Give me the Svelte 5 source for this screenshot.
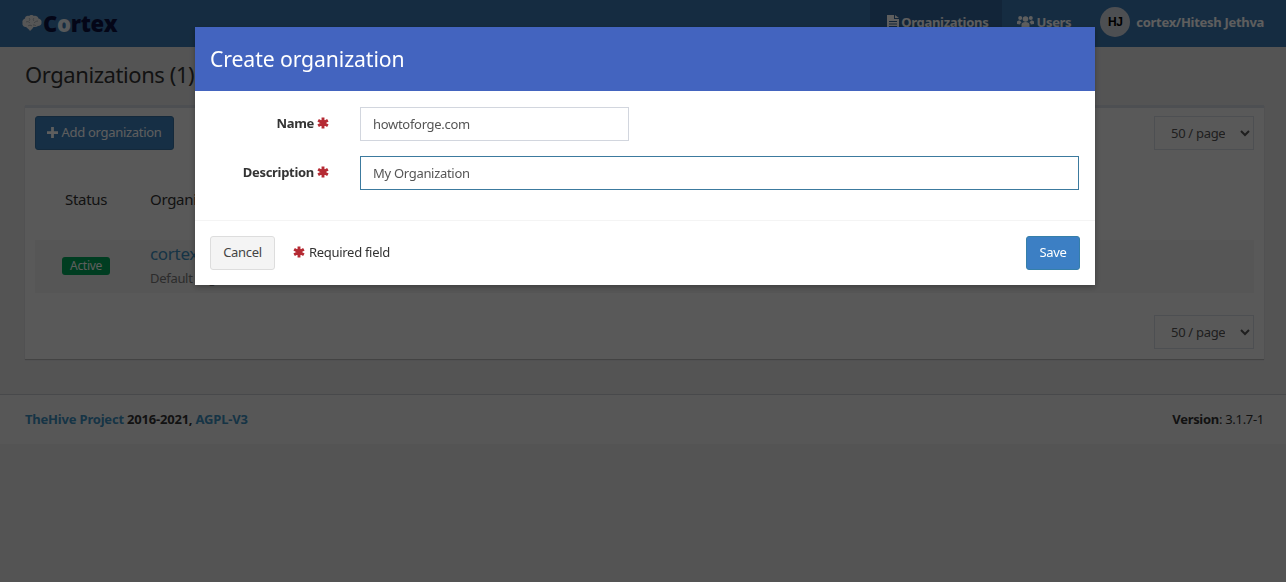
<script>
  let name = $state("howtoforge.com");
  let description = $state("My Organization");
  const pageSizes = ["50 / page"];
</script>

{#snippet star()}
  <svg class="star" viewBox="0 0 12 12" aria-hidden="true">
    <path d="M6 6V.400M6 6l4.850-2.800M6 6l4.850 2.800M6 6v5.600M6 6L1.150 8.800M6 6L1.150 3.200" />
  </svg>
{/snippet}

<div class="page">
  <header class="navbar">
    <div class="logo">
      <svg class="brain" viewBox="0 0 20 18" aria-hidden="true">
        <path d="M8 17c-1-2-3-3-4-4-2 0-4-1.500-3.500-4C0 7 1 5 3 4.500c0-2 2-3 4-2.500 1-1.500 4-1.500 5 0 2-.5 4 .5 4.500 2.500 2 .5 3.500 2 3 4 .3 2-1.500 3.500-3.500 3.500-1 1-3 1-4.500 1-.5 1-1.500 2-3.500 4z" />
        <path class="folds" d="M4 8c2-1 3 0 4 1M7 4c1 1 1 2 0 3M12 4c-1 1-1 2 0 3M16 7c-2 0-3 1-4 2M6 12c1-1 3-1 4 0M14 12c-1-1-2-1-3-1" />
      </svg>
      <span class="wordmark">C<span class="o">o</span>rtex</span>
    </div>
    <nav class="nav">
      <a class="nav-item active" href="#/orgs">
        <svg class="nav-icon" viewBox="0 0 12 14" aria-hidden="true">
          <path fill-rule="evenodd" d="M0 0h7v4h5v10H0zM8 0l4 3H8zM2 6v1h8V6zM2 8.500v1h8v-1zM2 11v1h8v-1z" />
        </svg>
        Organizations
      </a>
      <a class="nav-item" href="#/users">
        <svg class="nav-icon users" viewBox="0 0 17 14" aria-hidden="true">
          <circle cx="8.500" cy="4" r="2.800" />
          <circle cx="3.200" cy="3" r="2" />
          <circle cx="13.800" cy="3" r="2" />
          <path d="M4.500 13V9.500C4.500 8 6 7 8.500 7s4 1 4 2.500V13zM0 9V7c0-1 1-1.500 3-1.500 .8 1 1 1.500 1.500 2C3.500 8 3.300 8.500 3.200 9.500zM17 9V7c0-1-1-1.500-3-1.500-.8 1-1 1.500-1.500 2 1 .5 1.200 1 1.300 2z" />
        </svg>
        Users
      </a>
      <div class="user">
        <span class="avatar">HJ</span>
        <span class="user-name">cortex/Hitesh Jethva</span>
      </div>
    </nav>
  </header>

  <main class="content">
    <h1>Organizations (1)</h1>
    <section class="box">
      <div class="toolbar">
        <button class="btn-add">
          <svg class="plus" viewBox="0 0 12 12" aria-hidden="true"><path d="M4.500 0h3v4.500H12v3H7.500V12h-3V7.500H0v-3h4.500z" /></svg>
          Add organization
        </button>
        <select class="page-size">
          {#each pageSizes as size}<option>{size}</option>{/each}
        </select>
      </div>
      <div class="table-head">
        <span>Status</span>
        <span>Organization</span>
      </div>
      <div class="table-row">
        <div class="status"><span class="badge">Active</span></div>
        <div class="org">
          <a class="org-link" href="#/cortex">cortex</a>
          <div class="org-desc">Default organization</div>
        </div>
      </div>
      <div class="toolbar bottom">
        <select class="page-size">
          {#each pageSizes as size}<option>{size}</option>{/each}
        </select>
      </div>
    </section>
  </main>

  <footer class="footer">
    <div class="credits"><a href="#/hive">TheHive Project</a> 2016-2021, <a href="#/agpl">AGPL-V3</a></div>
    <div class="version"><b>Version</b>: 3.1.7-1</div>
  </footer>
</div>

<div class="backdrop">
  <div class="modal">
    <div class="modal-header">Create organization</div>
    <form class="modal-body">
      <div class="field">
        <label for="org-name">Name {@render star()}</label>
        <input id="org-name" class="short" bind:value={name} />
      </div>
      <div class="field">
        <label for="org-desc">Description {@render star()}</label>
        <input id="org-desc" class="focused" bind:value={description} />
      </div>
    </form>
    <div class="modal-footer">
      <button class="btn-cancel">Cancel</button>
      <span class="required">{@render star()} Required field</span>
      <button class="btn-save">Save</button>
    </div>
  </div>
</div>

<style>
  :global(body) {
    font: 13px "Noto Sans", "Open Sans", sans-serif;
    color: #333;
    background: #e4e4e5;
  }

  .page {
    min-height: 582px;
    letter-spacing: -0.3px;
  }

  a {
    text-decoration: none;
    color: #3c8dbc;
  }

  .navbar {
    display: flex;
    justify-content: space-between;
    height: 47px;
    background: #3b78b0;
  }

  .logo {
    display: flex;
    align-items: center;
    gap: 1px;
    padding-left: 22px;
    height: 47px;
  }

  .brain {
    width: 20px;
    height: 18px;
    margin-top: -2px;
  }

  .brain path {
    fill: #e8e8e8;
  }

  .brain .folds {
    fill: none;
    stroke: #9aa4ad;
    stroke-width: 0.8;
  }

  .wordmark {
    font: 800 22px/1 "Open Sans", sans-serif;
    color: #0c1240;
    margin-top: -1px;
  }

  .wordmark .o {
    color: #e9eff3;
  }

  .nav {
    display: flex;
    align-items: center;
    padding-right: 22px;
  }

  .nav-item {
    display: flex;
    align-items: center;
    gap: 2px;
    height: 47px;
    padding: 0 15px 3px;
    color: #fff;
    font-weight: 700;
    box-sizing: border-box;
  }

  .nav-item.active {
    background: #33669a;
    padding: 0 14px 3px 17px;
  }

  .nav-item:nth-child(2) {
    padding-right: 14px;
  }

  .nav-icon {
    width: 12px;
    height: 14px;
    fill: #fff;
  }

  .nav-icon.users {
    width: 17px;
  }

  .user {
    display: flex;
    align-items: center;
    gap: 6px;
    color: #fff;
    font-weight: 700;
    margin-left: 15px;
    padding-bottom: 3px;
  }

  .avatar {
    display: grid;
    place-items: center;
    width: 30px;
    height: 30px;
    border-radius: 50%;
    background: #d2d6de;
    color: #000;
    font: 700 12px "Liberation Sans", sans-serif;
  }

  .content {
    padding: 0 22px 0 25px;
  }

  h1 {
    margin: 0;
    padding: 11px 0 15px;
    font-size: 22px;
    line-height: 32px;
    font-weight: 400;
    letter-spacing: -0.42px;
  }

  .box {
    background: #f1f1f1;
    border-top: 3px solid #d2d6de;
    padding: 8px 10px 10px;
    box-shadow: 0 1px 1px rgba(0, 0, 0, 0.2);
  }

  .toolbar {
    display: flex;
    justify-content: space-between;
    align-items: center;
    height: 34px;
  }

  .toolbar.bottom {
    justify-content: flex-end;
    margin-top: 22px;
  }

  .btn-add {
    display: flex;
    align-items: center;
    gap: 3px;
    width: 139px;
    height: 34px;
    justify-content: center;
    padding: 0 0 2px;
    border: 1px solid #36709f;
    border-radius: 3px;
    background: #3d80bc;
    color: #fff;
    font: inherit;
    letter-spacing: inherit;
  }

  .plus {
    width: 11px;
    height: 11px;
    fill: #fff;
  }

  .page-size {
    width: 100px;
    height: 34px;
    border: 1px solid #d2d6de;
    background: #f1f1f1;
    color: #555;
    font: inherit;
    letter-spacing: -0.3px;
    padding: 0 12px;
  }

  .table-head {
    display: grid;
    grid-template-columns: 85px 1fr;
    padding: 39px 0 0 30px;
    font-size: 15px;
    line-height: 20px;
    height: 51px;
  }

  .table-row {
    display: grid;
    grid-template-columns: 115px 1fr;
    align-items: center;
    height: 53px;
    background: #e9e9e9;
  }

  .status {
    padding: 0 0 2px 27px;
  }

  .badge {
    display: block;
    width: 48px;
    height: 18px;
    line-height: 18px;
    text-align: center;
    border-radius: 3px;
    background: #00a65a;
    color: #fff;
    font-size: 12px;
  }

  .org {
    padding-bottom: 2px;
  }

  .org-link {
    font-size: 17px;
    line-height: 20px;
  }

  .org-desc {
    color: #777;
    font-size: 13px;
    margin-top: 5px;
  }

  .footer {
    display: flex;
    justify-content: space-between;
    align-items: center;
    height: 50px;
    margin-top: 35px;
    padding: 0 22px 1px 25px;
    background: #ececec;
    border-top: 1px solid #c4c6cc;
    box-sizing: border-box;
    font-weight: 700;
  }

  .credits {
    letter-spacing: -0.2px;
  }

  .footer a {
    font-weight: 700;
  }

  .version {
    font-weight: 400;
  }

  .backdrop {
    position: fixed;
    inset: 0;
    background: rgba(0, 0, 0, 0.63);
  }

  .modal {
    width: 900px;
    margin: 27px 0 0 195px;
    background: #fff;
    letter-spacing: -0.3px;
    box-shadow: 0 2px 6px rgba(0, 0, 0, 0.3);
  }

  .modal-header {
    height: 64px;
    padding: 0 15px;
    line-height: 63px;
    background: #4364bf;
    color: #fff;
    font-size: 21.200px;
    letter-spacing: -0.1px;
  }

  .modal-body {
    display: flex;
    flex-direction: column;
    gap: 15px;
    padding: 16px 16px 30px 15px;
  }

  .field {
    display: flex;
    align-items: center;
    gap: 31px;
  }

  .field label {
    display: flex;
    align-items: center;
    justify-content: flex-end;
    gap: 3px;
    width: 119px;
    font-weight: 700;
    margin-top: -3px;
  }

  .star {
    width: 12px;
    height: 12px;
    flex: none;
    fill: none;
    stroke: #b52a33;
    stroke-width: 2.900;
  }

  input {
    width: 719px;
    height: 34px;
    padding: 0 12px;
    box-sizing: border-box;
    border: 1px solid #d2d6de;
    border-radius: 0;
    color: #555;
    font: inherit;
    letter-spacing: inherit;
    outline: none;
  }

  input.short {
    width: 269px;
  }

  input.focused {
    border-color: #3c7a9e;
  }

  .modal-footer {
    display: flex;
    align-items: flex-start;
    height: 65px;
    padding: 15px 15px 0;
    border-top: 1px solid #f4f4f4;
    box-sizing: border-box;
  }

  .btn-cancel {
    width: 65px;
    height: 34px;
    padding: 0 0 2px;
    background: #f4f4f4;
    border: 1px solid #ddd;
    border-radius: 3px;
    color: #444;
    font: inherit;
    letter-spacing: inherit;
  }

  .required {
    display: flex;
    align-items: center;
    gap: 4px;
    height: 32px;
    margin-left: 18px;
  }

  .btn-save {
    width: 54px;
    height: 34px;
    margin-left: auto;
    padding: 0 0 2px;
    background: #3c7fc4;
    border: 1px solid #367fa9;
    border-radius: 3px;
    color: #fff;
    font: inherit;
    letter-spacing: inherit;
  }
</style>
